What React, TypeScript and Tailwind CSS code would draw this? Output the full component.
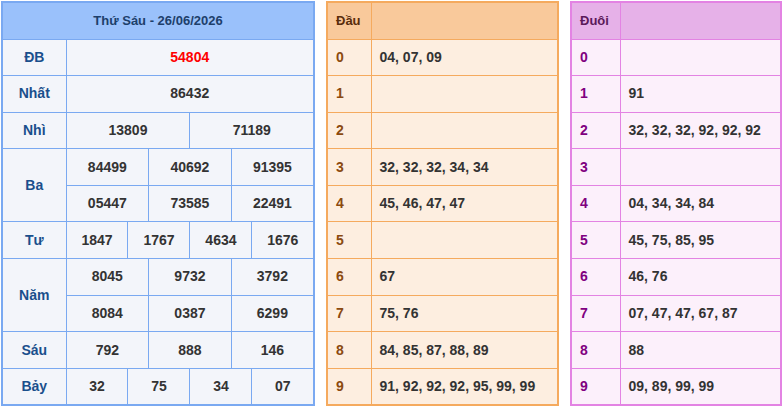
const font = { fontFamily: '"Liberation Sans", Arial, sans-serif' };

type Cell = { v: string; span: number; red?: boolean };
const rows: { label: string; lines: Cell[][] }[] = [
  { label: 'ĐB', lines: [[{ v: '54804', span: 12, red: true }]] },
  { label: 'Nhất', lines: [[{ v: '86432', span: 12 }]] },
  { label: 'Nhì', lines: [[{ v: '13809', span: 6 }, { v: '71189', span: 6 }]] },
  {
    label: 'Ba',
    lines: [
      [{ v: '84499', span: 4 }, { v: '40692', span: 4 }, { v: '91395', span: 4 }],
      [{ v: '05447', span: 4 }, { v: '73585', span: 4 }, { v: '22491', span: 4 }],
    ],
  },
  { label: 'Tư', lines: [[{ v: '1847', span: 3 }, { v: '1767', span: 3 }, { v: '4634', span: 3 }, { v: '1676', span: 3 }]] },
  {
    label: 'Năm',
    lines: [
      [{ v: '8045', span: 4 }, { v: '9732', span: 4 }, { v: '3792', span: 4 }],
      [{ v: '8084', span: 4 }, { v: '0387', span: 4 }, { v: '6299', span: 4 }],
    ],
  },
  { label: 'Sáu', lines: [[{ v: '792', span: 4 }, { v: '888', span: 4 }, { v: '146', span: 4 }]] },
  { label: 'Bảy', lines: [[{ v: '32', span: 3 }, { v: '75', span: 3 }, { v: '34', span: 3 }, { v: '07', span: 3 }]] },
];

const dau = ['04, 07, 09', '', '', '32, 32, 32, 34, 34', '45, 46, 47, 47', '', '67', '75, 76', '84, 85, 87, 88, 89', '91, 92, 92, 92, 95, 99, 99'];
const duoi = ['', '91', '32, 32, 32, 92, 92, 92', '', '04, 34, 34, 84', '45, 75, 85, 95', '46, 76', '07, 47, 47, 67, 87', '88', '09, 89, 99, 99'];

function SideTable({ title, data, kind }: { title: string; data: string[]; kind: 'dau' | 'duoi' }) {
  const o = kind === 'dau';
  const bd = o ? 'border-[#f5aa5e]' : 'border-[#e383e3]';
  return (
    <table className={`table-fixed border-collapse border-2 ${bd} ${o ? 'w-[233px] bg-[#fdeee0]' : 'w-[212px] bg-[#fcf0fb]'}`}>
      <colgroup>
        <col className={o ? 'w-[44px]' : 'w-[49px]'} />
        <col />
      </colgroup>
      <tbody>
        <tr className={`h-[37px] ${o ? 'bg-[#f9c99b]' : 'bg-[#e6b1e8]'}`}>
          <td className={`border ${bd} pl-2 text-[13px] font-bold ${o ? 'text-[#5a2d0c]' : 'text-[#5a1a5a]'}`}>{title}</td>
          <td className={`border ${bd}`}></td>
        </tr>
        {data.map((d, i) => (
          <tr key={i} className="h-[36.6px]">
            <td className={`border ${bd} pl-2 text-[14px] font-bold ${o ? 'text-[#8b4a10]' : 'text-[#800080]'}`}>{i}</td>
            <td className={`border ${bd} pl-2 text-[14px] font-bold text-[#333] whitespace-nowrap`}>{d}</td>
          </tr>
        ))}
      </tbody>
    </table>
  );
}

export default function App() {
  return (
    <div className="w-[782px] h-[408px] bg-white flex items-start pt-[1px] pl-[1px] gap-[11px]" style={font}>
      <table className="table-fixed border-collapse border-2 border-[#7aa9f1] w-[314px] bg-[#f3f5fa]">
        <colgroup>
          <col className="w-[64px]" />
          {Array.from({ length: 12 }).map((_, i) => (
            <col key={i} />
          ))}
        </colgroup>
        <tbody>
          <tr className="h-[37px] bg-[#9ac1fb]">
            <td colSpan={13} className="border border-[#7aa9f1] text-center text-[13px] font-bold text-[#1d3f6b]">
              Thứ Sáu - 26/06/2026
            </td>
          </tr>
          {rows.map((r) =>
            r.lines.map((line, li) => (
              <tr key={r.label + li} className="h-[36.6px]">
                {li === 0 && (
                  <td rowSpan={r.lines.length} className="border border-[#7aa9f1] text-center text-[14px] font-bold text-[#1a4f8c]">
                    {r.label}
                  </td>
                )}
                {line.map((c, ci) => (
                  <td
                    key={ci}
                    colSpan={c.span}
                    className={`border border-[#7aa9f1] text-center text-[14px] font-bold ${c.red ? 'text-[#ff0000]' : 'text-[#333]'}`}
                  >
                    {c.v}
                  </td>
                ))}
              </tr>
            ))
          )}
        </tbody>
      </table>
      <SideTable title="Đầu" data={dau} kind="dau" />
      <SideTable title="Đuôi" data={duoi} kind="duoi" />
    </div>
  );
}
